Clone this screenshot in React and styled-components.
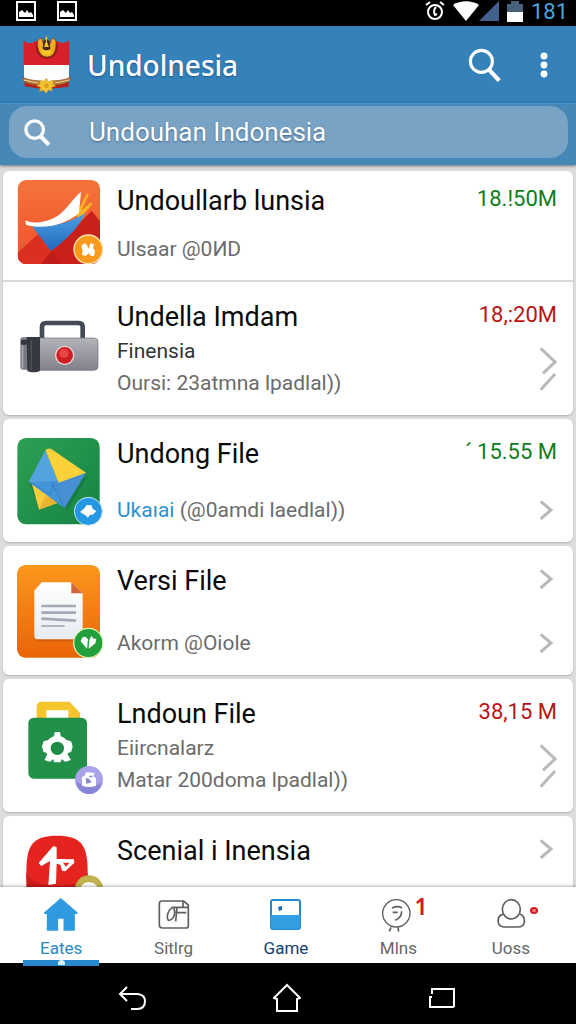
import styled, { createGlobalStyle } from "styled-components";

const GlobalStyle = createGlobalStyle`
  * {
    box-sizing: border-box;
  }

  body {
    margin: 0;
    font-family: Roboto, "Noto Sans", sans-serif;
    background: #dcdddf;
  }

  button {
    display: flex;
    align-items: center;
    justify-content: center;
    padding: 0;
    border: 0;
    background: none;
    font: inherit;
    color: inherit;
    cursor: pointer;
  }

  svg {
    display: block;
    flex: none;
  }
`;

/* ---------- drawings ---------- */

const AlarmIcon = () => (
  <svg width="20" height="20" viewBox="0 0 20 20" fill="none" stroke="#fff" strokeWidth="2">
    <circle cx="10" cy="11" r="7" />
    <path d="M1 4l4-3M19 4l-4-3M11 6c-3 3-2 6-1 8l2-1" />
  </svg>
);

const PictureIcon = () => (
  <svg width="20" height="20" viewBox="0 0 20 20">
    <rect x="1" y="1" width="18" height="18" fill="none" stroke="#fff" strokeWidth="2" />
    <path d="M3 16v-5l3-2 3 3 2-3 2 3 2-1 2 3v2z" fill="#fff" />
  </svg>
);

const WifiIcon = () => (
  <svg width="26" height="20" viewBox="0 0 26 20">
    <path d="M0 4C7-1 19-1 26 4L13 20z" fill="#fff" />
  </svg>
);

const SignalIcon = () => (
  <svg width="20" height="20" viewBox="0 0 20 20">
    <path d="M20 0v20H0z" fill="#41618a" />
  </svg>
);

const BatteryIcon = () => (
  <svg width="16" height="21" viewBox="0 0 16 21">
    <path d="M4 0h8v3h4v8H0V3h4z" fill="#48617a" />
    <path d="M0 11h16v10H0z" fill="#fff" />
  </svg>
);

const Emblem = () => (
  <svg width="49" height="59" viewBox="66 105 147 177">
    <path d="M71 122q17 14 34 2h68q18 12 35-3v75H71z" fill="#d8212a" />
    <path d="M72 195h135v42l-34 18h-68l-33-18z" fill="#fff" />
    <path d="M74 246l34 8h64l34-8v14l-36 5h-60l-36-6z" fill="#b51f1c" />
    <path d="M69 232c14 8 30 9 52 11l-5 12c-20 0-38-4-47-15zM210 232c-14 8-30 9-52 11l5 12c20 0 38-4 47-15z" fill="#b37b38" stroke="#8b4724" strokeWidth="2" />
    <path d="M70 240l45 9M209 240l-45 9" stroke="#efd291" strokeWidth="3" />
    <path d="M106 124c-1 30 10 52 35 52s36-22 32-52l-9 28q-24 20-49 0z" fill="#8f1d1b" />
    <path d="M113 124c2-7 8-10 12-9l14 43 17-43c8 1 12 6 12 14 0 25-7 42-28 42s-29-24-27-47z" fill="#efae1c" stroke="#7d341c" strokeWidth="2" />
    <path d="M130 126l9-16 10 16 2 20-11 8-12-8z" fill="#45251a" />
    <path d="M139 107l4 9-3 7 7 18h-15l6-18-3-7zM124 151h31l-5 13h-21z" fill="#f4c72d" />
    <path d="M139 235l7 10 15-5-2 12 8 6-12 4 1 11-11-3-7 10-7-9-12 3 3-12-12-5 11-5-2-11 13 3z" fill="#f2c434" stroke="#d2971e" strokeWidth="2" />
    <circle cx="139" cy="257" r="7" fill="#e39b20" />
  </svg>
);

const SearchIcon = ({ size, weight }) => (
  <svg width={size} height={size} viewBox="0 0 99 99" fill="none" stroke="#fff" strokeWidth={weight}>
    <circle cx="39" cy="39" r="32" />
    <path d="M62 64l29 31" strokeWidth={weight + 3} />
  </svg>
);

const DotsIcon = () => (
  <svg width="8" height="28" viewBox="0 0 8 28" fill="#fff">
    <circle cx="4" cy="5" r="3.4" />
    <circle cx="4" cy="14" r="3.4" />
    <circle cx="4" cy="23" r="3.4" />
  </svg>
);

const Chevron = () => (
  <svg width="18" height="20" viewBox="538 241 54 60" fill="none" stroke="#b9b9b9" strokeWidth="9">
    <path d="M543 245l31 26-31 27" />
  </svg>
);

const DoubleChevron = () => (
  <svg width="18" height="64" viewBox="538 507 54 192" fill="none" stroke="#b9b9b9" strokeWidth="9">
    <path d="M543 547l43 41-36 34" />
    <path d="M586 624l-43 47" />
  </svg>
);

const BoatIcon = () => (
  <svg width="86" height="86" viewBox="51 42 258 258">
    <defs>
      <linearGradient id="boatBg" x1="0" y1="0" x2="0" y2="1">
        <stop offset="0" stopColor="#f5733a" />
        <stop offset="1" stopColor="#f0512f" />
      </linearGradient>
      <linearGradient id="hull" x1="0" y1="0" x2="0" y2="1">
        <stop offset="0" stopColor="#4ba0e4" />
        <stop offset="1" stopColor="#2468bd" />
      </linearGradient>
      <clipPath id="boatClip">
        <rect x="53" y="45" width="247" height="252" rx="26" />
      </clipPath>
    </defs>
    <g clipPath="url(#boatClip)">
      <path d="M53 45h247v252H53z" fill="url(#boatBg)" />
      <path d="M53 263l65-58 50 92H53z" fill="#e2331f" />
      <path d="M155 257l120-120 25 32v128H178z" fill="#c9201b" />
      <path d="M118 205l37 52-43 40H53v-34z" fill="#dc2f22" />
      <path d="M155 257l27 40h-60z" fill="#bd1c1a" />
    </g>
    <path d="M228 150l33-66 6 4-22 48 28-24 5 5-43 47z" fill="#f8b522" />
    <path d="M92 178c20 28 42 54 60 80 50-34 88-76 104-114-48 30-104 46-164 34z" fill="url(#hull)" />
    <path d="M76 166c20 12 70 8 105-20 26-22 42-50 62-66l-6 64c-42 36-104 50-159 36z" fill="#fff" />
    <circle cx="265" cy="253" r="43" fill="#f99a1c" stroke="#ffe2b0" strokeWidth="4" />
    <path d="M244 243l9-9 8 6 4 12 7-18 10 4-3 11 6 8-3 16h-10l-6-9-8 9-12-3 2-13z" fill="#fff" />
  </svg>
);

const CaseIcon = () => (
  <svg width="86" height="58" viewBox="51 117 258 174">
    <defs>
      <linearGradient id="steel" x1="0" y1="0" x2="0" y2="1">
        <stop offset="0" stopColor="#b3b4ba" />
        <stop offset="1" stopColor="#818289" />
      </linearGradient>
    </defs>
    <path d="M126 176v-38q0-12 12-12h98q12 0 12 12v38" fill="none" stroke="#454b56" strokeWidth="14" />
    <rect x="61" y="169" width="40" height="97" rx="8" fill="#777980" />
    <rect x="63" y="177" width="18" height="14" rx="3" fill="#33363c" />
    <rect x="65" y="193" width="5" height="70" fill="#a8a9ae" />
    <rect x="98" y="171" width="196" height="97" rx="12" fill="url(#steel)" stroke="#6b6d75" strokeWidth="2" />
    <path d="M80 168h40v100q-4 6-18 6-18 0-20-6z" fill="#35383e" />
    <path d="M94 178v90" stroke="#4d5057" strokeWidth="5" />
    <circle cx="194" cy="223" r="29" fill="#e8d0d0" />
    <circle cx="194" cy="223" r="25" fill="#cf1d24" />
    <circle cx="192" cy="217" r="14" fill="#e74645" />
  </svg>
);

const EnvelopeIcon = () => (
  <svg width="86" height="90" viewBox="51 63 258 270">
    <defs>
      <linearGradient id="envBg" x1="0" y1="0" x2="1" y2="1">
        <stop offset="0" stopColor="#2da054" />
        <stop offset="1" stopColor="#168244" />
      </linearGradient>
    </defs>
    <rect x="52" y="69" width="247" height="259" rx="26" fill="url(#envBg)" />
    <path d="M88 204l30 84 146-108-60 104z" fill="#10663b" opacity=".4" />
    <path d="M95 204l22 80 66-24z" fill="#f6cb3e" />
    <path d="M117 284l20-42 44 18z" fill="#e8b432" />
    <path d="M136 106l-50 94 78 8 12-6z" fill="#54a3df" />
    <path d="M88 202l76-4 94-25-64 106z" fill="#468fd2" />
    <path d="M88 202l65 0 41 77z" fill="#4395d9" />
    <path d="M153 202l41 77M92 204l60 34 10-33" stroke="#3277b8" strokeWidth="2" fill="none" />
    <path d="M136 105q9-8 19-2l103 70-82 30z" fill="#fbd13a" />
    <circle cx="265" cy="289" r="42" fill="#2597e3" stroke="#c7e6fa" strokeWidth="3" />
    <path d="M240 291l14-12 6-9 14 1 4 10 11 8-11 10-9 1-5 8-8-7z" fill="#fff" />
  </svg>
);

const DocumentIcon = () => (
  <svg width="86" height="96" viewBox="51 69 258 288">
    <defs>
      <linearGradient id="docBg" x1="0" y1="0" x2="0" y2="1">
        <stop offset="0" stopColor="#fb981c" />
        <stop offset="1" stopColor="#ea6408" />
      </linearGradient>
      <linearGradient id="paper" x1="0" y1="0" x2="0" y2="1">
        <stop offset="0" stopColor="#fff" />
        <stop offset="1" stopColor="#e8ebf1" />
      </linearGradient>
    </defs>
    <rect x="51" y="75" width="249" height="278" rx="26" fill="url(#docBg)" />
    <path d="M103 290q2 14 14 14h120q12-2 12-14z" fill="#c4520a" opacity=".6" />
    <path d="M103 152l22-25h89l34 33v127q0 11-11 11H114q-11 0-11-11z" fill="url(#paper)" />
    <path d="M214 127v33h34z" fill="#d3653a" />
    <path d="M124 198h104M124 218h104M124 236l104 6" stroke="#a4a9b5" strokeWidth="8" />
    <path d="M124 258h70" stroke="#a4a9b5" strokeWidth="5" />
    <circle cx="265" cy="309" r="44" fill="#23a03d" stroke="#d8f5b0" strokeWidth="4" />
    <path d="M242 304l6-12 8-2 8 8-3 28zM266 326l2-26 6-12 7 8 8 0-3 14z" fill="#fff" />
  </svg>
);

const GearBagIcon = () => (
  <svg width="86" height="100" viewBox="51 63 258 300">
    <path d="M110 132V96q0-16 16-16h83l31 34v18h-35v-26h-66v26z" fill="#f5c52e" />
    <rect x="85" y="128" width="176" height="183" rx="16" fill="#23904a" />
    <g fill="#fff" stroke="#fff" strokeWidth="4" strokeLinejoin="round">
      <circle cx="172" cy="218" r="34" />
      <path d="M162 192l4-19h12l4 19zM142 198l-10 3-4 14 4 14 12 4zM202 198l10 3 4 14-4 14-12 4zM145 236l-9 18 14 4 14-12zM199 236l11 18-14 4-16-12zM160 246l4 14h16l5-14z" />
    </g>
    <circle cx="172" cy="220" r="20" fill="#218c48" />
    <circle cx="267" cy="315" r="42" fill="#a9a3ea" />
    <path d="M230 320a37 37 0 0 0 74 0q-30 30-74 0z" fill="#8985d6" />
    <path d="M246 306l8-4 4-10 26 2-4 10 8 6v22q-20 8-42 0z" fill="#fff" />
    <path d="M257 310l8 0 10 12-16 4zM268 302h9v5h-9z" fill="#8985d6" />
  </svg>
);

const ArrowAppIcon = () => (
  <svg width="86" height="96" viewBox="51 471 258 288">
    <path d="M79 590c0-80 16-111 92-111s92 31 92 111v60q-10 70-92 70t-92-70z" fill="#e5231f" />
    <path d="M79 590c1 50 4 130 92 130s90-60 92-130q-20 40-92 40t-92-40z" fill="#d01b1c" />
    <path d="M145 627l5-72-26 15-8-9 44-51 10 4v35l52 1 1 10-27 26-10-2-5-18-11-3-2 60z" fill="#fff" />
    <path d="M189 560l19 0-10 12z" fill="#e5231f" />
    <circle cx="267" cy="641" r="43" fill="#c0b34c" />
    <path d="M240 640q5-21 27-21t28 21v16h-55z" fill="#fff" />
  </svg>
);

const HomeTabIcon = () => (
  <svg width="36" height="34" viewBox="135 56 105 102" fill="#2f9ae0">
    <path d="M187 56l51 44-3 4h-6v50h-34v-36h-16v36h-34v-50h-7l-2-4z" />
  </svg>
);

const SavedTabIcon = () => (
  <svg width="36" height="34" viewBox="465 56 108 102" fill="none" stroke="#5e5e5e" strokeWidth="5">
    <path d="M482 65h66l14 12v62q0 7-8 7h-70q-9 0-9-9V73q0-8 7-8z" />
    <path d="M546 66v18M512 84h50M524 100h32M528 84l-4 42M514 84c-16 12-18 30-12 39 14 0 24-18 16-38" />
  </svg>
);

const CardTabIcon = () => (
  <svg width="36" height="34" viewBox="0 0 36 34">
    <rect x="3" y="2" width="29" height="29" rx="2" fill="#fff" stroke="#2389cf" strokeWidth="2" />
    <path d="M3 17h29v12q0 2-2 2H5q-2 0-2-2z" fill="#319fe2" />
    <path d="M10 9l4-1v4l-3 1z" fill="#1f6cab" />
  </svg>
);

const FaceTabIcon = () => (
  <svg width="36" height="34" viewBox="276 56 108 102" fill="none" stroke="#5e5e5e" strokeWidth="4">
    <circle cx="325" cy="102" r="41" />
    <path d="M309 144l-5 12M330 144l2 13" strokeWidth="5" />
    <path d="M312 86q18-8 30 0M341 96q0 20-20 27M314 99h15" strokeWidth="5" />
  </svg>
);

const UserTabIcon = () => (
  <svg width="36" height="34" viewBox="611 56 108 102" fill="none" stroke="#5e5e5e" strokeWidth="5">
    <ellipse cx="666" cy="90" rx="27" ry="29" />
    <path d="M642 105c-12 2-17 12-15 25 2 9 10 13 20 13h38c12 0 19-6 20-15 1-13-4-21-14-24" />
  </svg>
);

const BackIcon = () => (
  <svg width="28" height="26" viewBox="0 0 28 26" fill="none" stroke="#fff" strokeWidth="2">
    <path d="M9 2L2 9l7 7M2 9h18q7 1 7 7 0 8-8 8h-6" />
  </svg>
);

const HouseIcon = () => (
  <svg width="28" height="30" viewBox="0 0 28 30" fill="none" stroke="#fff" strokeWidth="2">
    <path d="M4 16L1 15 14 2l13 13-3 1v12H4z" />
  </svg>
);

const RecentIcon = () => (
  <svg width="28" height="22" viewBox="0 0 28 22" fill="none" stroke="#fff" strokeWidth="2">
    <path d="M4 7V2h22v18M1 10h3M2 10v10h24" />
  </svg>
);

/* ---------- data ---------- */

const groups = [
  [
    { title: "Undoullarb lunsia", lines: ["Ulsaar @0\u0418D"], size: "18.!50M", tone: "up", icon: BoatIcon, compact: true },
    { title: "Undella Imdam", strong: "Finensia", lines: ["Oursi: 23atmna lpadlal))"], size: "18,:20M", tone: "down", icon: CaseIcon, marks: [DoubleChevron] },
  ],
  [{ title: "Undong File", link: "Ukaıai", lines: ["(@0amdi laedlal))"], size: "\u02CA 15.55 M", tone: "up", icon: EnvelopeIcon, marks: [Chevron] }],
  [{ title: "Versi File", lines: ["Akorm @Oiole"], icon: DocumentIcon, marks: [Chevron, Chevron] }],
  [{ title: "Lndoun File", lines: ["Eiircnalarz", "Matar 200doma lpadlal))"], size: "38,15 M", tone: "down", icon: GearBagIcon, marks: [DoubleChevron] }],
  [{ title: "Scenial i Inensia", lines: [], icon: ArrowAppIcon, marks: [Chevron] }],
];

const tabs = [
  { label: "Eates", icon: HomeTabIcon, active: true, color: "#2a86c0" },
  { label: "Sitlrg", icon: SavedTabIcon, color: "#666" },
  { label: "Game", icon: CardTabIcon, color: "#123f75" },
  { label: "Mlns", icon: FaceTabIcon, color: "#666", badge: "1" },
  { label: "Uoss", icon: UserTabIcon, color: "#666", dot: true },
];

/* ---------- page ---------- */

const App = () => {
  return (
    <Screen>
      <GlobalStyle />
      <StatusBar>
        <StatusGroup $gap={21}>
          <PictureIcon />
          <PictureIcon />
        </StatusGroup>
        <StatusGroup $gap={8}>
          <AlarmIcon />
          <StatusGroup>
            <WifiIcon />
            <SignalIcon />
          </StatusGroup>
          <BatteryIcon />
          <Clock>181</Clock>
        </StatusGroup>
      </StatusBar>

      <Header>
        <Emblem />
        <HeaderTitle>Undolnesia</HeaderTitle>
        <button aria-label="Search">
          <SearchIcon size={34} weight={9} />
        </button>
        <MenuButton aria-label="Menu">
          <DotsIcon />
        </MenuButton>
      </Header>

      <SearchArea>
        <SearchField>
          <SearchIcon size={27} weight={12} />
          <SearchInput type="text" aria-label="Undouhan" defaultValue="Undouhan Indonesia" />
        </SearchField>
      </SearchArea>

      <List>
        {groups.map((rows, i) => (
          <Card key={i}>
            {rows.map((row) => (
              <FileRow key={row.title} {...row} />
            ))}
          </Card>
        ))}
      </List>

      <TabBar>
        {tabs.map((tab) => (
          <Tab key={tab.label} $color={tab.color} $active={tab.active}>
            <TabIcon>
              <tab.icon />
              {tab.badge && <Badge>{tab.badge}</Badge>}
              {tab.dot && <Dot />}
            </TabIcon>
            {tab.label}
          </Tab>
        ))}
      </TabBar>

      <SystemBar>
        <button aria-label="Back"><BackIcon /></button>
        <button aria-label="Home"><HouseIcon /></button>
        <button aria-label="Recent"><RecentIcon /></button>
      </SystemBar>
    </Screen>
  );
};

const FileRow = ({ title, strong, link, lines, size, tone, icon: Icon, compact, marks = [] }) => (
  <Row $compact={compact}>
    <Icon />
    <Info $compact={compact}>
      <Title>{title}</Title>
      <div>
        {strong && <Line $dark>{strong}</Line>}
        {lines.map((line) => (
          <Line key={line}>
            {link && <a href="#ulasan">{link}</a>} {line}
          </Line>
        ))}
      </div>
    </Info>
    <Aside $compact={compact}>
      {size && <Size $tone={tone}>{size}</Size>}
      {marks.map((Mark, i) => (
        <MarkBox key={i}>
          <Mark />
        </MarkBox>
      ))}
    </Aside>
  </Row>
);

const Screen = styled.div`
  display: flex;
  flex-direction: column;
  height: 100vh;
  overflow: hidden;
`;

const StatusBar = styled.div`
  display: flex;
  flex: none;
  justify-content: space-between;
  height: 26px;
  padding: 0 8px 4px 16px;
  background: #000;
`;

const StatusGroup = styled.div`
  display: flex;
  align-items: center;
  gap: ${(p) => p.$gap || 0}px;
`;

const Clock = styled.span`
  padding-top: 2px;
  font-size: 22px;
  line-height: 24px;
  color: #4aa5dc;
`;

const Header = styled.header`
  display: flex;
  flex: none;
  align-items: center;
  height: 77px;
  padding: 0 24px 0 22px;
  background: #3582bb;
`;

const HeaderTitle = styled.h1`
  flex: 1;
  margin: 0 0 0 16px;
  font-family: "Noto Sans", sans-serif;
  font-size: 28px;
  font-weight: 500;
  line-height: 36px;
  color: #fff;
  text-shadow: 0 1px 2px rgba(0, 40, 80, 0.5);
`;

const MenuButton = styled.button`
  width: 16px;
  height: 36px;
  margin-left: 34px;
`;

const SearchArea = styled.div`
  flex: none;
  padding: 2px 8px 7px 9px;
  border-top: 1px solid #4a93c8;
  background: #4588b7;
  box-shadow: 0 1px 3px rgba(0, 0, 0, 0.5);
  z-index: 1;
`;

const SearchField = styled.div`
  display: flex;
  align-items: center;
  height: 52px;
  padding: 0 15px;
  border-radius: 18px;
  background: #79a3c4;
`;

const SearchInput = styled.input`
  flex: 1;
  min-width: 0;
  margin-left: 38px;
  padding: 0;
  border: 0;
  outline: 0;
  background: none;
  font-family: Roboto, sans-serif;
  font-size: 26px;
  line-height: 36px;
  color: #fff;
  text-shadow: 0 1px 2px rgba(0, 40, 80, 0.5);
`;

const List = styled.main`
  display: flex;
  flex: 1;
  flex-direction: column;
  gap: 4px;
  min-height: 0;
  padding: 6px 3px 0;
  overflow: hidden;
  background: #dcdddf;
`;

const Card = styled.section`
  flex: none;
  border-radius: 6px;
  background: #fff;
  box-shadow: 0 1px 2px rgba(0, 0, 0, 0.2);
`;

const Row = styled.article`
  display: flex;
  align-items: stretch;
  gap: 12px;
  padding: ${(p) => (p.$compact ? "8px 16px 15px 14px" : "17px 16px 16px 14px")};

  & + & {
    border-top: 2px solid #d8d8d8;
  }

  > svg {
    align-self: center;
  }
`;

const Info = styled.div`
  display: flex;
  flex: 1;
  flex-direction: column;
  justify-content: space-between;
  min-width: 0;
  padding-top: ${(p) => (p.$compact ? 4 : 0)}px;
  padding-left: 2px;
`;

const Title = styled.h2`
  margin: 0;
  font-size: 27px;
  font-weight: 400;
  line-height: 36px;
  color: #0a0a0a;
  white-space: nowrap;
`;

const Line = styled.p`
  margin: 0;
  font-size: 21px;
  line-height: 32px;
  color: ${(p) => (p.$dark ? "#333" : "#6b6b6b")};
  white-space: nowrap;

  a {
    color: #2f8fcb;
    text-decoration: none;
  }
`;

const Aside = styled.div`
  display: flex;
  flex: none;
  flex-direction: column;
  align-items: flex-end;
  justify-content: space-between;
  padding-top: ${(p) => (p.$compact ? 4 : 0)}px;
`;

const Size = styled.span`
  font-size: 22px;
  line-height: 32px;
  color: ${(p) => (p.$tone === "up" ? "#0f7d1b" : "#b81414")};
  white-space: nowrap;
`;

const MarkBox = styled.span`
  display: flex;
  align-items: center;
  min-height: 32px;
`;

const TabBar = styled.nav`
  display: grid;
  flex: none;
  grid-template-columns: repeat(5, 1fr);
  height: 76px;
  padding: 0 9px 0 5px;
  background: #fff;
  box-shadow: 0 -1px 3px rgba(0, 0, 0, 0.3);
  z-index: 1;
`;

const Tab = styled.button`
  && {
    position: relative;
    flex-direction: column;
    justify-content: flex-start;
    gap: 4px;
    margin: 0 18px;
    padding-top: 11px;
    border-bottom: ${(p) => (p.$active ? "6px solid #2889cf" : "0")};
    font-size: 17px;
    line-height: 24px;
    color: ${(p) => p.$color};
  }

  /* small pip on the active underline */
  &::after {
    content: "";
    display: ${(p) => (p.$active ? "block" : "none")};
    position: absolute;
    bottom: -5px;
    width: 7px;
    height: 5px;
    border-radius: 4px 4px 0 0;
    background: #d9f0fc;
  }
`;

const TabIcon = styled.span`
  position: relative;
`;

const Badge = styled.span`
  position: absolute;
  top: -4px;
  left: 34px;
  font-family: "Noto Sans", sans-serif;
  font-size: 23px;
  font-weight: 600;
  line-height: 24px;
  color: #d21a1f;
`;

const Dot = styled.span`
  position: absolute;
  top: 9px;
  left: 37px;
  width: 8px;
  height: 7px;
  border: 2px solid #d21a1f;
  border-radius: 50%;
  background: #f08080;
`;

const SystemBar = styled.footer`
  display: grid;
  flex: none;
  grid-template-columns: repeat(3, 1fr);
  height: 61px;
  padding: 8px 57px 0 54px;
  align-items: center;
  background: #000;
`;

export default App;
